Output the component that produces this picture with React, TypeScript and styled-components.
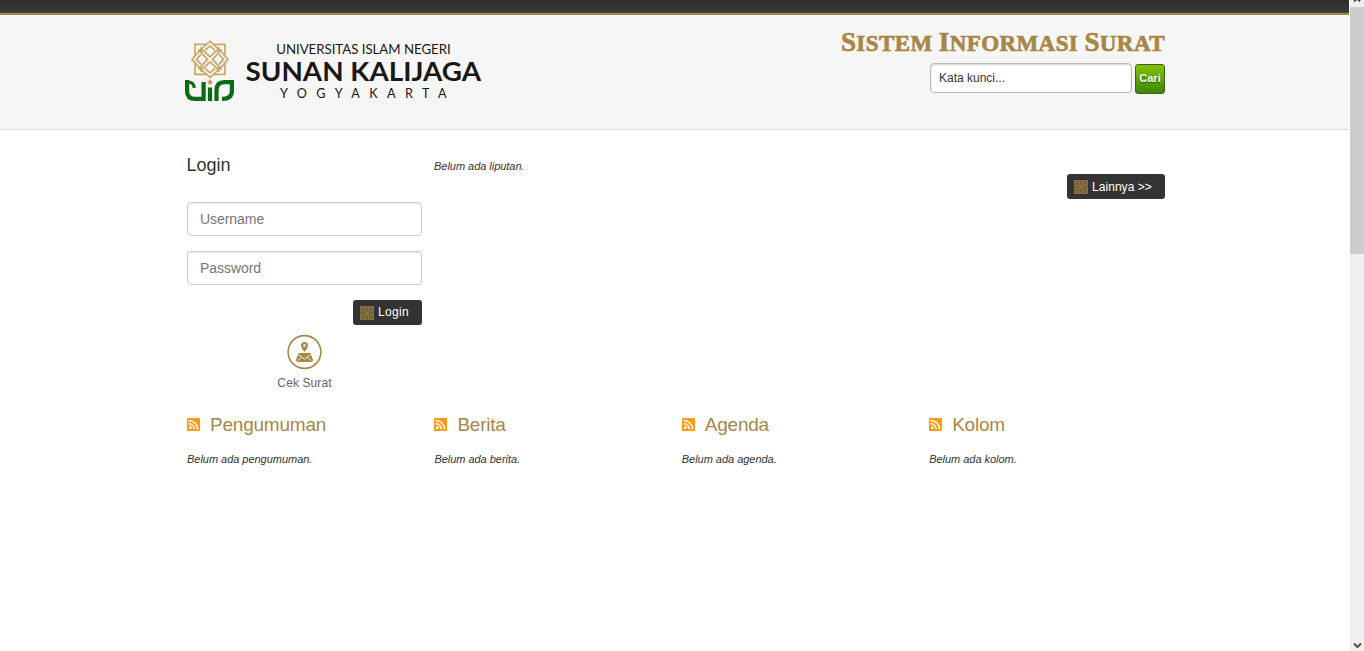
import React from "react";
import styled, { createGlobalStyle } from "styled-components";

const GlobalStyle = createGlobalStyle`
  * { box-sizing: border-box; }
  body {
    margin: 0;
    overflow: hidden;
    background: #fff;
    color: #333;
    font-family: "Liberation Sans", Arial, sans-serif;
  }
`;

const Screen = styled.div`
  display: flex;
  width: 1364px;
  height: 651px;
`;
const Page = styled.div`
  width: 1349px;
  margin-right: 1px;
`;
const TopBar = styled.div`
  height: 15px;
  background: linear-gradient(#2d2d2d, #393939 12px, #4b473e 12px, #4b473e 13px, #a68746 13px);
`;
const Header = styled.header`
  height: 115px;
  background: #f6f6f6;
  border-bottom: 1px solid #dcdcdc;
`;
const Container = styled.div`
  display: flex;
  justify-content: space-between;
  width: 980px;
  margin-left: 185px;
`;
const Brand = styled.a`
  display: flex;
  margin-top: 23px;
  svg { display: block; }
`;
const HeaderSide = styled.div`
  display: flex;
  flex-direction: column;
  align-items: flex-end;
`;
const SiteTitle = styled.h1`
  margin: 11px 0 0;
  height: 38px;
  white-space: nowrap;
  color: #a68746;
  font: bold 23px/32px "Liberation Serif", serif;
  letter-spacing: 0.42px;
  -webkit-text-stroke: 0.7px #a68746;
`;
const Initial = styled.span`
  font-size: 27px;
`;
const SearchForm = styled.div`
  display: flex;
  gap: 3px;
`;
const SearchInput = styled.input`
  width: 202px;
  height: 30px;
  margin-top: -1px;
  padding: 0 8px 1px;
  border: 1px solid #bbb;
  border-radius: 4px;
  background: #fff;
  box-shadow: inset 0 1px 2px rgba(0, 0, 0, 0.2);
  color: #333;
  font: 12px "Liberation Sans", sans-serif;
`;
const SearchButton = styled.button`
  width: 30px;
  height: 30px;
  padding: 0 0 2px;
  border: 1px solid #3f5f22;
  border-radius: 3px;
  background: linear-gradient(#86c000, #398a00);
  color: #fff;
  font: bold 11px "Liberation Sans", sans-serif;
  text-shadow: 0 1px 1px rgba(0, 0, 0, 0.5);
`;
const Main = styled.main`
  display: grid;
  grid-template-columns: 235px 1fr 98px;
  column-gap: 12px;
  width: 978px;
  height: 283px;
  margin-left: 187px;
`;
const LoginPanel = styled.section`
  display: flex;
  flex-direction: column;
  align-items: flex-end;
  padding-top: 24px;
`;
const LoginTitle = styled.h2`
  align-self: flex-start;
  height: 48px;
  margin: 0 0 0 -0.5px;
  font-size: 18px;
  font-weight: 400;
  line-height: 22px;
`;
const Field = styled.input`
  width: 235px;
  height: 34px;
  margin-bottom: 15px;
  padding: 0 12px;
  border: 1px solid #ccc;
  border-radius: 4px;
  box-shadow: inset 0 1px 1px rgba(0, 0, 0, 0.075);
  font: 14px "Liberation Sans", sans-serif;
  &::placeholder { color: #777; opacity: 1; letter-spacing: -0.05px; }
`;
const DarkButton = styled.button<{ $width: number; $top?: number; $shift?: number }>`
  display: flex;
  align-items: center;
  gap: 4px;
  width: ${(p) => p.$width}px;
  height: 25px;
  margin-top: ${(p) => p.$top ?? 0}px;
  padding: 0 0 0 7px;
  border: 0;
  border-radius: 3px;
  background: #333;
  color: #fff;
  font: 12px "Liberation Sans", sans-serif;
  white-space: nowrap;
  span { margin-top: ${(p) => p.$shift ?? -1}px; letter-spacing: ${(p) => (p.$shift ? 0.05 : 0.3)}px; }
`;
const LetterCheck = styled.a`
  display: flex;
  flex-direction: column;
  align-items: center;
  align-self: center;
  margin-top: 9px;
  color: #666;
  font-size: 12px;
  line-height: 16px;
  letter-spacing: 0.1px;
  svg { display: block; margin-bottom: 5px; }
`;
const Note = styled.p<{ $top: number }>`
  margin: ${(p) => p.$top}px 0 0;
  font-size: 11px;
  font-style: italic;
  line-height: 16px;
  letter-spacing: -0.03px;
`;
const Feeds = styled.section`
  display: grid;
  grid-template-columns: repeat(4, 247.4px);
  margin-left: 187px;
`;
const FeedTitle = styled.h2`
  display: flex;
  align-items: center;
  gap: 10px;
  height: 24px;
  margin: 0;
  color: #a68746;
  font-size: 19px;
  font-weight: 400;
  letter-spacing: -0.22px;
  svg { display: block; margin-top: -1px; }
`;
const Scrollbar = styled.div`
  display: flex;
  flex-direction: column;
  width: 14px;
  background: #f0f0f0;
  svg { display: block; }
`;
const Thumb = styled.div`
  height: 247px;
  margin-bottom: auto;
  background: #cdcdcd;
`;

const quarterTurns = [0, 90, 180, 270];

const University = () => (
  <svg width="300" height="66" viewBox="0 0 300 66" role="img">
    <g transform="translate(25 21.4)" fill="none" stroke="#c9a866" strokeWidth="1.7">
      {quarterTurns.map((a) => (
        <g key={a} transform={`rotate(${a})`}>
          <path d="M-6 -12.8 L0 -18 L6 -12.8" />
          <path d="M4 -15 H15 V-4" />
          <path d="M6 -12.8 L12.8 -6" />
          <path d="M-12 -9 H-7 L0 -2.5 L7 -9 H12" />
          <path d="M-9 -12 V-7 M9 -12 V-7" />
          <path d="M-5 -9 L0 -13.5 L5 -9" />
        </g>
      ))}
    </g>
    <g fill="none" stroke="#0d6b17" strokeWidth="4.2">
      <path d="M0 44.2 H2.1 V53 Q2.1 60.9 10 60.9 H18.6 V44" />
      <path d="M2 44.2 Q9.5 43.8 9 50" strokeWidth="3.2" />
      <path d="M25 49.5 V63" />
      <path d="M31.5 63 V52.5 Q31.5 44.2 39.5 44.2 H46.9 V53 Q46.9 60.9 37 60.9" />
    </g>
    <path d="M25 41.2 L27.8 44.2 L25 47.2 L22.2 44.2 Z" fill="#c5a25c" />
    <g fill="#1b1715" fontFamily="Lato, sans-serif">
      <text x="91.2" y="15.5" fontSize="12.6" fontWeight="400" textLength="174.5" lengthAdjust="spacingAndGlyphs">UNIVERSITAS ISLAM NEGERI</text>
      <text x="60.5" y="42.5" fontSize="26" fontWeight="700" textLength="235.5" lengthAdjust="spacingAndGlyphs">SUNAN KALIJAGA</text>
      <text x="95" y="59.5" fontSize="12.6" fontWeight="400" letterSpacing="9.4" textLength="176" lengthAdjust="spacingAndGlyphs">YOGYAKARTA</text>
    </g>
  </svg>
);

const Ornament = () => (
  <svg width="14" height="14" viewBox="0 0 14 14" fill="none" stroke="#947a47" strokeWidth="0.9">
    <path d="M1 0 H6 L7 1 L8 0 H13 L14 1 V6 L13 7 L14 8 V13 L13 14 H8 L7 13 L6 14 H1 L0 13 V8 L1 7 L0 6 V1 Z" fill="#6b5935" stroke="none" />
    <circle cx="7" cy="7" r="1" />
    {quarterTurns.map((a) => (
      <g key={a} transform={`rotate(${a} 7 7)`}>
        <path d="M0.5 5.8 V0.5 H5.8 V3.3 L3.3 5.8 Z" />
        <path d="M1 1 L7 7 M4 3 L7 0.7 L10 3 M4.4 7 L7 4.4" />
      </g>
    ))}
  </svg>
);

const LetterIcon = () => (
  <svg width="36" height="36" viewBox="0 0 36 36">
    <circle cx="18.5" cy="18" r="16.4" fill="none" stroke="#a68746" strokeWidth="1.6" />
    <g transform="translate(0.5 0)">
      <path fill="#a68746" fillRule="evenodd" d="M18 8 A3.5 3.5 0 0 1 21.5 11.5 C21.5 14 18 18 18 18 C18 18 14.5 14 14.5 11.5 A3.5 3.5 0 0 1 18 8 Z M18 10.2 A1.3 1.3 0 1 0 18 12.8 A1.3 1.3 0 1 0 18 10.2 Z" />
      <path fill="#a68746" d="M12 19 H24 L26.5 26 Q26.5 28 24.5 28 H11.5 Q9.5 28 9.5 26 Z" />
      <path d="M11.7 20.4 L18 25 L24.3 20.4 M11.3 26.7 L15.3 23 M24.7 26.7 L20.7 23" fill="none" stroke="#fff" strokeWidth="0.8" />
    </g>
  </svg>
);

const FeedIcon = () => (
  <svg width="13" height="13" viewBox="0 0 13 13">
    <rect width="13" height="13" rx="0.5" fill="#ff9a17" />
    <circle cx="3.3" cy="9.7" r="1.4" fill="#fff" />
    <path d="M1.5 5.8 A5.4 5.4 0 0 1 7.2 11.5 M1.5 2.5 A9 9 0 0 1 10.6 11.5" fill="none" stroke="#fff" strokeWidth="1.4" />
  </svg>
);

const feeds = [
  ["Pengumuman", "Belum ada pengumuman."],
  ["Berita", "Belum ada berita."],
  ["Agenda", "Belum ada agenda."],
  ["Kolom", "Belum ada kolom."],
];

export default function App() {
  return (
    <Screen>
      <GlobalStyle />
      <Page>
        <TopBar />
        <Header>
          <Container>
            <Brand><University /></Brand>
            <HeaderSide>
              <SiteTitle>
                <Initial>S</Initial>ISTEM <Initial>I</Initial>NFORMASI <Initial>S</Initial>URAT
              </SiteTitle>
              <SearchForm>
                <SearchInput defaultValue="Kata kunci..." />
                <SearchButton>Cari</SearchButton>
              </SearchForm>
            </HeaderSide>
          </Container>
        </Header>
        <Main>
          <LoginPanel>
            <LoginTitle>Login</LoginTitle>
            <Field placeholder="Username" />
            <Field placeholder="Password" type="password" />
            <DarkButton $width={69}><Ornament /><span>Login</span></DarkButton>
            <LetterCheck><LetterIcon />Cek Surat</LetterCheck>
          </LoginPanel>
          <Note $top={28}>Belum ada liputan.</Note>
          <DarkButton $width={98} $top={44} $shift={1}><Ornament /><span>Lainnya &gt;&gt;</span></DarkButton>
        </Main>
        <Feeds>
          {feeds.map(([title, note]) => (
            <article key={title}>
              <FeedTitle><FeedIcon />{title}</FeedTitle>
              <Note $top={14}>{note}</Note>
            </article>
          ))}
        </Feeds>
      </Page>
      <Scrollbar>
        <svg width="14" height="7" viewBox="0 0 14 7"><path d="M4 1.5 L7 -1.5 L10 1.5" fill="none" stroke="#505050" strokeWidth="2" /></svg>
        <Thumb />
        <svg width="14" height="12" viewBox="0 0 14 12"><path d="M4 4.5 L7.5 8 L11 4.5" fill="none" stroke="#505050" strokeWidth="2" /></svg>
      </Scrollbar>
    </Screen>
  );
}
